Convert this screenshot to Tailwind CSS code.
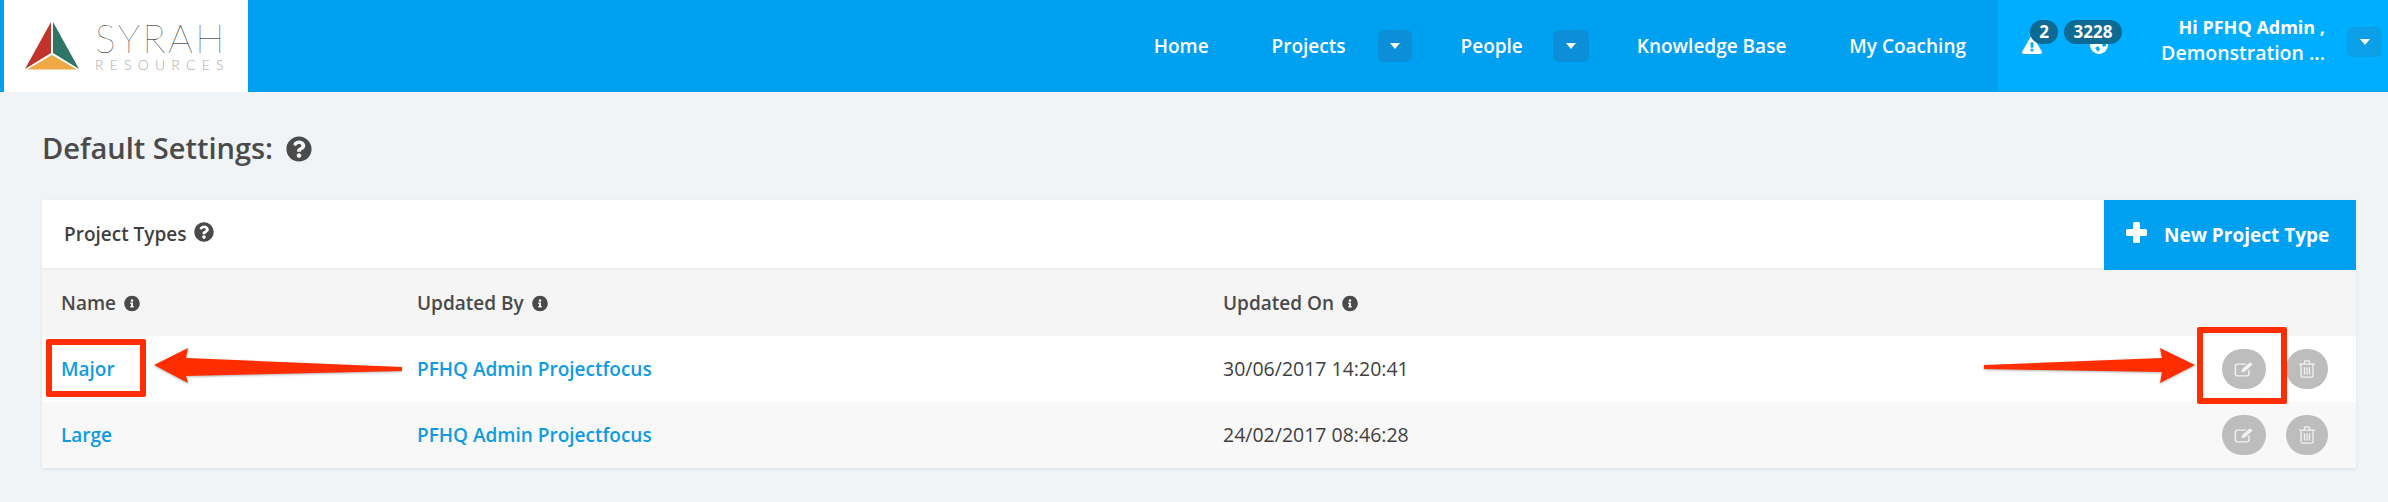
<!DOCTYPE html>
<html lang="en">
<head>
    <meta charset="UTF-8">
    <title>Default Settings</title>
    <script src="https://cdn.jsdelivr.net/npm/@tailwindcss/browser@4"></script>
</head>
<body class="relative w-[2388px] h-[502px] overflow-hidden bg-[#f0f4f7] font-['Open_Sans',sans-serif] text-[#4a4a4a]">
    <!-- top nav -->
    <nav class="h-[92px] flex bg-[#00a0f0] pl-1 text-white">
        <div class="w-[244px] bg-white flex items-center pl-[21px] gap-[16px]">
            <svg width="54" height="50" viewBox="0 0 54 50">
                <path d="M26 1 L26 32 L0 48 Z" fill="#c0342c"/>
                <path d="M28 1 L28 32 L54 48 Z" fill="#2f7565"/>
                <path d="M27 34 L52 48.500 L2 48.500 Z" fill="#eca944"/>
            </svg>
            <div class="w-[130px] mt-[1px]">
                <div class="font-['Lato',sans-serif] font-thin text-black text-[39px] leading-[34px] tracking-[2.500px]">SYRAH</div>
                <div class="font-['Lato',sans-serif] font-light text-[#aaa] text-[14px] leading-[14px] tracking-[6.200px] mt-[3px]">RESOURCES</div>
            </div>
        </div>
        <div class="flex-1 flex items-center justify-end text-[19px] font-semibold pr-[32px]">
            <a>Home</a>
            <a class="ml-[63px]">Projects</a>
            <span class="ml-[32px] w-[34px] h-[32px] rounded-[6px] bg-[#0a8fd8] flex items-center justify-center">
                <svg width="12" height="8" viewBox="0 0 12 8"><path d="M1 1 H11 L6 7 Z" fill="#fff"/></svg>
            </span>
            <a class="ml-[49px]">People</a>
            <span class="ml-[30px] w-[36px] h-[32px] rounded-[6px] bg-[#0a8fd8] flex items-center justify-center">
                <svg width="12" height="8" viewBox="0 0 12 8"><path d="M1 1 H11 L6 7 Z" fill="#fff"/></svg>
            </span>
            <a class="ml-[48px]">Knowledge Base</a>
            <a class="ml-[63px]">My Coaching</a>
        </div>
        <div class="relative w-[390px] bg-[#00aeff] flex items-center justify-end pr-[6px] border-b-2 border-[#0aa3ee]">
            <svg class="absolute left-[24px] top-[36px]" width="20" height="18" viewBox="0 0 576 512" fill="#fff"><path d="M569.517 440.013C587.975 472.007 564.806 512 527.94 512H48.054c-36.937 0-59.999-40.055-41.577-71.987L246.423 23.985c18.467-32.009 64.72-31.951 83.154 0l239.94 416.028zM288 354c-25.405 0-46 20.595-46 46s20.595 46 46 46 46-20.595 46-46-20.595-46-46-46zm-43.673-165.346l7.418 136c.347 6.364 5.609 11.346 11.982 11.346h48.546c6.373 0 11.635-4.982 11.982-11.346l7.418-136c.375-6.874-5.098-12.654-11.982-12.654h-63.383c-6.884 0-12.356 5.780-11.981 12.654z"/></svg>
            <span class="absolute left-[32px] top-[20px] w-[28px] h-[24px] rounded-full bg-[#0d6a93] text-[17px] font-bold flex items-center justify-center">2</span>
            <svg class="absolute left-[91px] top-[35px]" width="20" height="20" viewBox="0 0 20 20"><circle cx="10" cy="10" r="9" fill="#fff"/><path d="M6 13 l3 -2 l2 3 l-2 3 z M12 6 l5 1 l0 4 l-3 1 z" fill="#00aeff"/></svg>
            <span class="absolute left-[66px] top-[20px] w-[58px] h-[24px] rounded-full bg-[#0d6a93] text-[17px] font-bold flex items-center justify-center">3228</span>
            <div class="text-right leading-[25px] mr-[22px] mt-[-10px]">
                <div class="text-[18px] font-bold">Hi PFHQ Admin ,</div>
                <div class="text-[19.500px] font-semibold">Demonstration ...</div>
            </div>
            <span class="w-[35px] h-[30px] rounded-[6px] bg-[#0a9fe6] flex items-center justify-center mb-[6px]">
                <svg width="12" height="8" viewBox="0 0 12 8"><path d="M1 1 H11 L6 7 Z" fill="#fff"/></svg>
            </span>
        </div>
    </nav>

    <main class="pl-[42px] pr-[32px]">
        <h1 class="h-[108px] pt-[36px] flex items-start gap-[13px] text-[29px] leading-[40px] font-semibold">
            Default Settings:
            <svg class="mt-[8px]" width="26" height="26" viewBox="0 0 512 512" fill="#4a4a4a"><path d="M504 256c0 136.997-111.043 248-248 248S8 392.997 8 256C8 119.083 119.043 8 256 8s248 111.083 248 248zM262.655 90c-54.497 0-89.255 22.957-116.549 63.758-3.536 5.286-2.353 12.415 2.715 16.258l34.699 26.310c5.205 3.947 12.621 3.008 16.665-2.122 17.864-22.658 30.113-35.797 57.303-35.797 20.429 0 45.698 13.148 45.698 32.958 0 14.976-12.363 22.667-32.534 33.976C247.128 238.528 216 254.941 216 296v4c0 6.627 5.373 12 12 12h56c6.627 0 12-5.373 12-12v-1.333c0-28.462 83.186-29.647 83.186-106.667 0-58.002-60.165-102-116.531-102zM256 338c-25.365 0-46 20.635-46 46 0 25.364 20.635 46 46 46s46-20.636 46-46c0-25.365-20.635-46-46-46z"/></svg>
        </h1>

        <section class="bg-white shadow-[0_1px_3px_rgba(0,0,0,0.08)] text-[19px] font-semibold">
            <div class="h-[68px] flex items-start justify-between pl-[22px]">
                <div class="flex items-center gap-[7px] h-[68px] text-[#3f3f3f]">
                    Project Types
                    <svg class="mb-[4px]" width="20" height="20" viewBox="0 0 512 512" fill="#4a4a4a"><path d="M504 256c0 136.997-111.043 248-248 248S8 392.997 8 256C8 119.083 119.043 8 256 8s248 111.083 248 248zM262.655 90c-54.497 0-89.255 22.957-116.549 63.758-3.536 5.286-2.353 12.415 2.715 16.258l34.699 26.310c5.205 3.947 12.621 3.008 16.665-2.122 17.864-22.658 30.113-35.797 57.303-35.797 20.429 0 45.698 13.148 45.698 32.958 0 14.976-12.363 22.667-32.534 33.976C247.128 238.528 216 254.941 216 296v4c0 6.627 5.373 12 12 12h56c6.627 0 12-5.373 12-12v-1.333c0-28.462 83.186-29.647 83.186-106.667 0-58.002-60.165-102-116.531-102zM256 338c-25.365 0-46 20.635-46 46 0 25.364 20.635 46 46 46s46-20.636 46-46c0-25.365-20.635-46-46-46z"/></svg>
                </div>
                <button class="relative z-10 w-[252px] h-[70px] bg-[#00a0f0] text-white text-[19px] font-bold flex items-center pl-[22px] gap-[17px]">
                    <svg class="mb-[6px]" width="21" height="21" viewBox="0 0 21 21"><path d="M7 1.500 a1.500 1.500 0 0 1 1.500 -1.500 h4 a1.500 1.500 0 0 1 1.500 1.500 V7 h5.500 a1.500 1.500 0 0 1 1.500 1.500 v4 a1.500 1.500 0 0 1 -1.500 1.500 H14 v5.500 a1.500 1.500 0 0 1 -1.500 1.500 h-4 a1.500 1.500 0 0 1 -1.500 -1.500 V14 H1.500 a1.500 1.500 0 0 1 -1.500 -1.500 v-4 a1.500 1.500 0 0 1 1.500 -1.500 H7 Z" fill="#fff"/></svg>
                    New Project Type
                </button>
            </div>

            <div class="h-[68px] grid grid-cols-[356px_806px_1fr] items-center pl-[19px] bg-[#f5f5f6] border-t-2 border-[#eeeeee] text-[#4a4a4a]">
                <div class="flex items-center gap-[8px]">Name
                    <svg width="16" height="17" viewBox="0 0 512 512" fill="#4a4a4a"><path d="M256 8C119.043 8 8 119.083 8 256c0 136.997 111.043 248 248 248s248-111.003 248-248C504 119.083 392.957 8 256 8zm0 110c23.196 0 42 18.804 42 42s-18.804 42-42 42-42-18.804-42-42 18.804-42 42-42zm56 254c0 6.627-5.373 12-12 12h-88c-6.627 0-12-5.373-12-12v-24c0-6.627 5.373-12 12-12h12v-64h-12c-6.627 0-12-5.373-12-12v-24c0-6.627 5.373-12 12-12h64c6.627 0 12 5.373 12 12v100h12c6.627 0 12 5.373 12 12v24z"/></svg>
                </div>
                <div class="flex items-center gap-[8px]">Updated By
                    <svg width="16" height="17" viewBox="0 0 512 512" fill="#4a4a4a"><path d="M256 8C119.043 8 8 119.083 8 256c0 136.997 111.043 248 248 248s248-111.003 248-248C504 119.083 392.957 8 256 8zm0 110c23.196 0 42 18.804 42 42s-18.804 42-42 42-42-18.804-42-42 18.804-42 42-42zm56 254c0 6.627-5.373 12-12 12h-88c-6.627 0-12-5.373-12-12v-24c0-6.627 5.373-12 12-12h12v-64h-12c-6.627 0-12-5.373-12-12v-24c0-6.627 5.373-12 12-12h64c6.627 0 12 5.373 12 12v100h12c6.627 0 12 5.373 12 12v24z"/></svg>
                </div>
                <div class="flex items-center gap-[8px]">Updated On
                    <svg width="16" height="17" viewBox="0 0 512 512" fill="#4a4a4a"><path d="M256 8C119.043 8 8 119.083 8 256c0 136.997 111.043 248 248 248s248-111.003 248-248C504 119.083 392.957 8 256 8zm0 110c23.196 0 42 18.804 42 42s-18.804 42-42 42-42-18.804-42-42 18.804-42 42-42zm56 254c0 6.627-5.373 12-12 12h-88c-6.627 0-12-5.373-12-12v-24c0-6.627 5.373-12 12-12h12v-64h-12c-6.627 0-12-5.373-12-12v-24c0-6.627 5.373-12 12-12h64c6.627 0 12 5.373 12 12v100h12c6.627 0 12 5.373 12 12v24z"/></svg>
                </div>
            </div>

            <div class="h-[66px] grid grid-cols-[356px_806px_1fr_auto] items-center pl-[19px] pr-[28px] bg-white">
                <a class="text-[#0f9be0]">Major</a>
                <a class="text-[#0f9be0]">PFHQ Admin Projectfocus</a>
                <span class="text-[#3f3f3f] font-normal text-[19.500px]">30/06/2017 14:20:41</span>
                <div class="flex items-center gap-[20px]">
                    <span class="w-[44px] h-[40px] rounded-full bg-[#bdbdbd] flex items-center justify-center">
                        <svg width="20" height="16" viewBox="0 0 22 20" preserveAspectRatio="none" fill="none" stroke="#f2f2f2" stroke-width="1.600"><path d="M13 4 H4 a2.500 2.500 0 0 0 -2.500 2.500 V16 a2.500 2.500 0 0 0 2.500 2.500 H14 a2.500 2.500 0 0 0 2.500 -2.500 V11"/><path d="M8 14 l1 -4 L17.500 1.500 l3 3 L12 13 Z" fill="#f2f2f2" stroke="none"/></svg>
                    </span>
                    <span class="w-[42px] h-[40px] rounded-full bg-[#bdbdbd] flex items-center justify-center">
                        <svg width="16" height="18" viewBox="0 0 16 20" preserveAspectRatio="none" fill="none" stroke="#f2f2f2" stroke-width="1.300"><path d="M0 4.500 H16 M5 4.500 L6 1 H10 L11 4.500 M2 4.500 V17.500 a1.500 1.500 0 0 0 1.500 1.500 H12.500 a1.500 1.500 0 0 0 1.500 -1.500 V4.500 M5.500 8 V16 M8 8 V16 M10.500 8 V16"/></svg>
                    </span>
                </div>
            </div>

            <div class="h-[66px] grid grid-cols-[356px_806px_1fr_auto] items-center pl-[19px] pr-[28px] bg-[#f8f8f8]">
                <a class="text-[#0f9be0]">Large</a>
                <a class="text-[#0f9be0]">PFHQ Admin Projectfocus</a>
                <span class="text-[#3f3f3f] font-normal text-[19.500px]">24/02/2017 08:46:28</span>
                <div class="flex items-center gap-[20px]">
                    <span class="w-[44px] h-[40px] rounded-full bg-[#bdbdbd] flex items-center justify-center">
                        <svg width="20" height="16" viewBox="0 0 22 20" preserveAspectRatio="none" fill="none" stroke="#f2f2f2" stroke-width="1.600"><path d="M13 4 H4 a2.500 2.500 0 0 0 -2.500 2.500 V16 a2.500 2.500 0 0 0 2.500 2.500 H14 a2.500 2.500 0 0 0 2.500 -2.500 V11"/><path d="M8 14 l1 -4 L17.500 1.500 l3 3 L12 13 Z" fill="#f2f2f2" stroke="none"/></svg>
                    </span>
                    <span class="w-[42px] h-[40px] rounded-full bg-[#bdbdbd] flex items-center justify-center">
                        <svg width="16" height="18" viewBox="0 0 16 20" preserveAspectRatio="none" fill="none" stroke="#f2f2f2" stroke-width="1.300"><path d="M0 4.500 H16 M5 4.500 L6 1 H10 L11 4.500 M2 4.500 V17.500 a1.500 1.500 0 0 0 1.500 1.500 H12.500 a1.500 1.500 0 0 0 1.500 -1.500 V4.500 M5.500 8 V16 M8 8 V16 M10.500 8 V16"/></svg>
                    </span>
                </div>
            </div>
        </section>
    </main>

    <!-- annotation boxes and arrows drawn over the page -->
    <div class="absolute left-[46px] top-[339px] w-[100px] h-[58px] border-[6px] border-[#ff2d00] rounded-[2px]"></div>
    <div class="absolute left-[2197px] top-[327px] w-[90px] h-[77px] border-[6px] border-[#ff2d00] rounded-[2px]"></div>
    <svg class="absolute left-0 top-0 pointer-events-none drop-shadow-[0_1px_1px_rgba(0,0,0,0.3)]" width="2388" height="502" viewBox="0 0 2388 502">
        <path d="M154 365 L188 348 L186 358 L402 367 L402 371 L186 376 L188 383 Z" fill="#ff2d00"/>
        <path d="M2195 365 L2160 348 L2162 358 L1984 365 L1984 369 L2162 372 L2160 383 Z" fill="#ff2d00"/>
    </svg>
</body>
</html>
